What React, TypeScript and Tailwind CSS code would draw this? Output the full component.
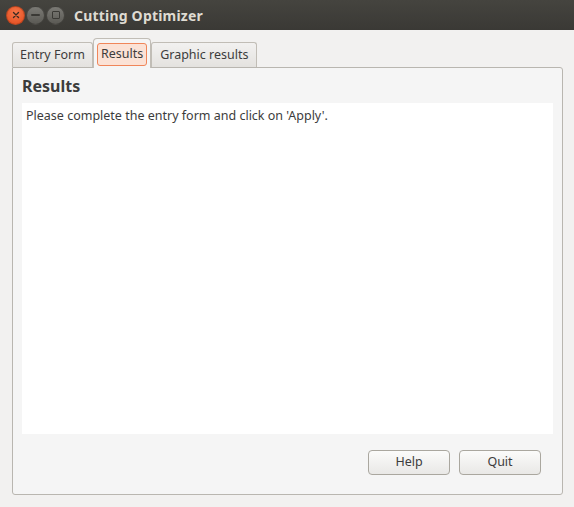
import React from 'react'

const font = { fontFamily: '"Noto Sans", "Open Sans", "DejaVu Sans", sans-serif' }

function TitleButton({ kind }: { kind: 'close' | 'min' | 'max' }) {
  if (kind === 'close') {
    return (
      <div className="w-[19px] h-[19px] rounded-full bg-[radial-gradient(circle_at_50%_35%,#f7784a,#e0491c)] border border-[#7a2a10]/40 flex items-center justify-center">
        <svg width="8" height="8" viewBox="0 0 8 8">
          <path d="M1.5 1.5 L6.5 6.5 M6.5 1.5 L1.5 6.5" stroke="#3c2a22" strokeWidth="1.4" strokeLinecap="round" />
        </svg>
      </div>
    )
  }
  return (
    <div className="w-[19px] h-[19px] rounded-full bg-[linear-gradient(#7b7a75,#5a5954)] border border-[#2d2c28]/60 flex items-center justify-center">
      {kind === 'min' ? (
        <div className="w-[9px] h-[2px] bg-[#3a3935] rounded-sm" />
      ) : (
        <div className="w-[8px] h-[8px] border-[1.5px] border-[#3a3935] rounded-[1px]" />
      )}
    </div>
  )
}

export default function App() {
  return (
    <div className="w-[574px] h-[507px] bg-[#f2f1f0] flex flex-col overflow-hidden" style={font}>
      {/* title bar */}
      <div className="h-[30px] shrink-0 bg-[linear-gradient(#45443f,#3a3935)] flex items-center pl-[6px]">
        <div className="flex items-center gap-[1px]">
          <TitleButton kind="close" />
          <TitleButton kind="min" />
          <TitleButton kind="max" />
        </div>
        <span className="ml-[9px] text-[14px] font-bold text-[#dfdbd2] tracking-[0.2px]">Cutting Optimizer</span>
      </div>

      {/* tabs */}
      <div className="flex items-end pl-[12px] h-[37px] shrink-0 relative z-10">
        <div className="h-[25px] px-[7px] flex items-center border border-[#c1bdb6] border-b-0 rounded-t-[3px] bg-[linear-gradient(#f2f1f0,#e4e2df)] text-[12.5px] text-[#3c3c3c]">
          Entry Form
        </div>
        <div className="h-[30px] px-[3px] pt-[4px] border border-[#c1bdb6] border-b-0 rounded-t-[4px] bg-[#f5f5f5] -mb-px">
          <div className="h-[23px] px-[3px] flex items-center border border-[#f0865a] rounded-[3px] bg-[#fbe2d6] text-[12.5px] text-[#3c3c3c]">
            Results
          </div>
        </div>
        <div className="h-[25px] px-[8px] flex items-center border border-[#c1bdb6] border-b-0 rounded-t-[3px] bg-[linear-gradient(#f2f1f0,#e4e2df)] text-[12.5px] text-[#3c3c3c]">
          Graphic results
        </div>
      </div>

      {/* panel */}
      <div className="mx-[12px] w-[551px] h-[428px] border border-[#b9b6b0] rounded-[3px] rounded-tl-none bg-[#f5f5f5] flex flex-col px-[9px]">
        <div className="h-[35px] shrink-0 flex items-center text-[16px] font-bold text-[#3c3c3c]">Results</div>
        <div className="h-[331px] shrink-0 bg-white px-[4px] pt-[4px] text-[12.5px] text-[#3c3c3c]">
          Please complete the entry form and click on 'Apply'.
        </div>
        <div className="flex justify-end gap-[9px] pr-[12px] pt-[16px]">
          <button className="w-[82px] h-[25px] rounded-[4px] border border-[#aaa79f] bg-[linear-gradient(#fbfbfa,#e9e8e6)] text-[12.5px] text-[#3c3c3c]">Help</button>
          <button className="w-[82px] h-[25px] rounded-[4px] border border-[#aaa79f] bg-[linear-gradient(#fbfbfa,#e9e8e6)] text-[12.5px] text-[#3c3c3c]">Quit</button>
        </div>
      </div>
    </div>
  )
}
